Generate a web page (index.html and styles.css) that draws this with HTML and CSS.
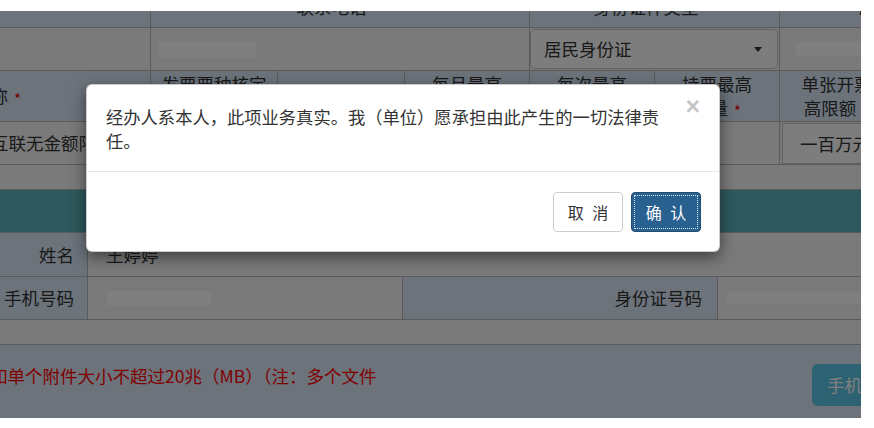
FILE: index.html
```html
<!DOCTYPE html>
<html lang="zh-CN">
<head>
<meta charset="utf-8">
<title>确认</title>
<link rel="stylesheet" href="styles.css">
</head>
<body>
<div class="page">
  <div class="row r1 cols-a">
    <div class="cell hd"></div>
    <div class="cell hd"><span class="cut">联系电话 <span class="req">*</span></span></div>
    <div class="cell hd"><span class="cut">身份证件类型 <span class="req">*</span></span></div>
    <div class="cell hd start"><span class="cut cut-end">证件号码</span></div>
  </div>
  <div class="row r2 cols-a">
    <div class="cell"></div>
    <div class="cell start"><span class="blur blur-tel"></span></div>
    <div class="cell"><div class="select">居民身份证<span class="caret"></span></div></div>
    <div class="cell start"><span class="blur blur-id"></span></div>
  </div>
  <div class="row r3 cols-b">
    <div class="cell hd start"><span class="name-lbl">发票名称<span class="req">*</span></span></div>
    <div class="cell hd col"><span>发票票种核定</span><span>类型</span></div>
    <div class="cell hd col"><span>领票方式</span></div>
    <div class="cell hd col"><span>每月最高</span><span>领票量</span></div>
    <div class="cell hd col"><span>每次最高</span><span>领票量</span></div>
    <div class="cell hd col"><span>持票最高</span><span>数量<span class="req">*</span></span></div>
    <div class="cell hd col"><span>单张开票</span><span>高限额<span class="req">*</span></span></div>
  </div>
  <div class="row r4 cols-b">
    <div class="cell start"><span class="kind">互联无金额限制</span></div>
    <div class="cell">增值税普通发票</div>
    <div class="cell">1</div>
    <div class="cell">25</div>
    <div class="cell">25</div>
    <div class="cell"></div>
    <div class="cell"><div class="input">一百万元</div></div>
  </div>
  <div class="row r5"></div>
  <div class="row r6"></div>
  <div class="row r7 cols-c">
    <div class="cell lbl">姓名</div>
    <div class="cell val span3">王婷婷</div>
  </div>
  <div class="row r8 cols-c">
    <div class="cell lbl">手机号码</div>
    <div class="cell val"><span class="blur blur-phone"></span></div>
    <div class="cell lbl lbl-id">身份证号码</div>
    <div class="cell val"><span class="blur blur-idno"></span></div>
  </div>
  <div class="row r9"></div>
  <div class="r10">
    <p class="note">如单个附件大小不超过20兆（MB）（注：多个文件</p>
    <button class="btn-info" type="button">手机上传</button>
  </div>
  <div class="backdrop"></div>
</div>

<div class="modal">
  <div class="modal-body">
    <button type="button" class="close">×</button>
    <p class="msg">经办人系本人，此项业务真实。我（单位）愿承担由此产生的一切法律责任。</p>
  </div>
  <div class="modal-footer">
    <button type="button" class="btn btn-default">取 消</button>
    <button type="button" class="btn btn-primary">确 认</button>
  </div>
</div>
</body>
</html>
```

FILE: styles.css
```css
* {
  box-sizing: border-box;
  margin: 0;
  padding: 0;
}

html, body {
  background: #fff;
}

body {
  font-family: "Noto Sans CJK SC", "Noto Sans", sans-serif;
  font-size: 17.5px;
  color: #333;
  line-height: 24px;
}

.page {
  position: relative;
  width: 861px;
  height: 407px;
  margin-top: 11px;
  overflow: hidden;
  background: #f5f5f5;
}

.row {
  display: grid;
  border-bottom: 1px solid #b4b4b4;
}

.cols-a { grid-template-columns: 151px 379px 250px 130px; }
.cols-b { grid-template-columns: 151px 127px 127px 125px 125px 125px 114px; }
.cols-c { grid-template-columns: 88px 315px 315px 200px; }

.cell {
  display: flex;
  align-items: center;
  justify-content: center;
  text-align: center;
  border-right: 1px solid #b4b4b4;
  white-space: nowrap;
}

.cell.start { justify-content: flex-start; }
.cell.col { flex-direction: column; }
.cell.col > span { display: block; line-height: 24px; }

.hd { background: #d8e7f7; }

.r1 { height: 17px; }
.r1 .cell { overflow: hidden; align-items: flex-start; }
.cut { display: block; margin-top: -16px; }
.cut-end { margin-left: 77px; }

.r2 { height: 43px; }
.blur {
  display: block;
  background: #ffffff;
}
.blur-tel { width: 97px; height: 17px; margin-left: 8px; }
.blur-id { width: 80px; height: 14px; margin-left: 16px; }

.select {
  position: relative;
  width: 248px;
  height: 40px;
  margin-left: -1px;
  border: 1px solid #c4c4c4;
  border-radius: 5px;
  background: #fbfbfb;
  text-align: left;
  padding: 7px 13px;
  line-height: 24px;
}
.caret {
  position: absolute;
  right: 15px;
  top: 17px;
  width: 0;
  height: 0;
  border-top: 5px solid #333;
  border-left: 4px solid transparent;
  border-right: 4px solid transparent;
}

.r3 { height: 51px; }
.name-lbl { margin-left: -62px; }
.req {
  display: inline-block;
  color: #e00;
  font-size: 15px;
  line-height: 15px;
  margin-left: 6px;
  vertical-align: -2px;
}

.r4 { height: 43px; }
.kind { margin-left: -9px; }
.input {
  width: 122px;
  height: 41px;
  margin-left: 2px;
  border: 1px solid #c4c4c4;
  background: #fafafa;
  line-height: 39px;
  text-align: left;
  padding-left: 17px;
}

.r5 { height: 25px; }
.r6 { height: 42px; background: #5db3bb; border-bottom: none; }

.r7 { height: 45px; border-top: 1px solid #b4b4b4; }
.r8 { height: 43px; }
.lbl {
  background: #d8e7f7;
  justify-content: flex-end;
  padding-right: 13px;
}
.lbl-id { padding-right: 15px; }
.val { justify-content: flex-start; padding-left: 18px; }
.span3 { grid-column: 2 / span 3; }
.blur-phone { width: 104px; height: 15px; margin-left: 1px; }
.blur-idno { width: 140px; height: 12px; margin-left: -9px; }

.r9 { height: 25px; }

.r10 {
  height: 73px;
  background: #d8e7f7;
  display: flex;
  align-items: center;
  justify-content: space-between;
}
.note {
  color: #ff0000;
  margin-left: -10px;
  margin-top: -12px;
}
.btn-info {
  flex: none;
  width: 110px;
  height: 42px;
  margin-right: -61px;
  margin-top: 6px;
  border: none;
  border-radius: 6px;
  background: #59c4e2;
  color: #fff;
  font-family: inherit;
  font-size: 17.5px;
  text-align: left;
  padding-left: 15px;
}

.backdrop {
  position: absolute;
  inset: 0;
  background: rgba(0, 0, 0, 0.5);
}

.modal {
  position: absolute;
  left: 86px;
  top: 84px;
  width: 634px;
  background: #fff;
  border: 1px solid rgba(0, 0, 0, 0.2);
  border-radius: 6px;
  box-shadow: 0 5px 15px rgba(0, 0, 0, 0.5);
}

.modal-body {
  padding: 20px 19px 18px;
}
.msg {
  color: #333;
  font-size: 17.3px;
}

.close {
  float: right;
  margin-top: -11px;
  margin-left: 20px;
  border: 0;
  background: transparent;
  font-family: "Liberation Sans", Arial, sans-serif;
  font-size: 25px;
  font-weight: bold;
  line-height: 1;
  color: #000;
  opacity: 0.22;
  text-shadow: 0 1px 0 #fff;
}

.modal-footer {
  display: flex;
  justify-content: flex-end;
  gap: 8px;
  padding: 20px 18px 19px;
  border-top: 1px solid #e5e5e5;
}

.btn {
  width: 70px;
  height: 40px;
  border-radius: 4px;
  font-family: inherit;
  font-size: 16px;
  line-height: 24px;
  word-spacing: 5px;
  cursor: pointer;
}
.btn-default {
  background: #fff;
  border: 1px solid #ccc;
  color: #333;
}
.btn-primary {
  background: #286090;
  border: 1px solid #204d74;
  color: #fff;
  outline: 1px dotted #d8e2ec;
  outline-offset: -4px;
}
```
